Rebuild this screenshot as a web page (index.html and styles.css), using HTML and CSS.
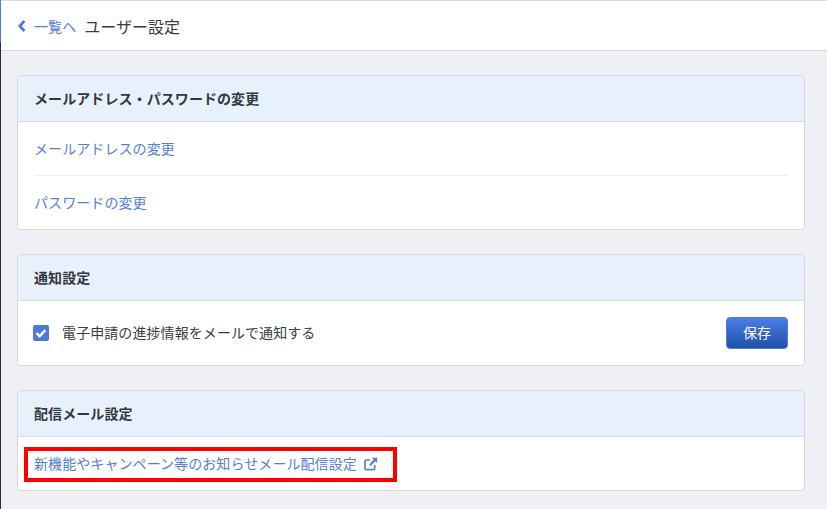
FILE: index.html
```html
<!DOCTYPE html>
<html lang="ja">
<head>
<meta charset="utf-8">
<title>ユーザー設定</title>
<link rel="stylesheet" href="styles.css">
</head>
<body>
<div class="rail"><div class="rail-active"></div></div>
<div class="page">
  <header class="topbar">
    <a class="back" href="#">
      <svg class="back-icon" viewBox="0 0 8 12" width="8" height="12"><path d="M6.4 1 1.8 6l4.6 5" fill="none" stroke="#4a7bdc" stroke-width="2.8"/></svg>
      <span>一覧へ</span>
    </a>
    <h1 class="title">ユーザー設定</h1>
  </header>
  <main class="content">
    <section class="card">
      <h2 class="card-head"><span class="lift">メールアドレス・パスワードの変更</span></h2>
      <div class="card-body">
        <div class="row"><a class="link lift" href="#">メールアドレスの変更</a></div>
        <div class="row row-last"><a class="link lift" href="#">パスワードの変更</a></div>
      </div>
    </section>
    <section class="card">
      <h2 class="card-head"><span class="lift">通知設定</span></h2>
      <div class="card-body">
        <div class="notify">
          <label class="check">
            <span class="box"><svg viewBox="0 0 16 16" width="16" height="16"><path d="M3.6 8.2 6.6 11.2 12.4 5.2" fill="none" stroke="#fff" stroke-width="2.4"/></svg></span>
            <span class="lift">電子申請の進捗情報をメールで通知する</span>
          </label>
          <button class="save" type="button"><span class="lift">保存</span></button>
        </div>
      </div>
    </section>
    <section class="card">
      <h2 class="card-head"><span class="lift">配信メール設定</span></h2>
      <div class="card-body mail">
        <a class="link ext" href="#"><span class="lift">新機能やキャンペーン等のお知らせメール配信設定</span>
          <svg viewBox="0 0 14 14" width="14" height="14"><path d="M10.7 8v3.6a1 1 0 0 1-1 1H2a1 1 0 0 1-1-1V4a1 1 0 0 1 1-1H6" fill="none" stroke="#5480d8" stroke-width="1.7"/><path d="M7.8.8h5.4v5.4l-1.9-1.9-4.6 4.7-1.6-1.6 4.6-4.7z" fill="#5480d8"/></svg>
        </a>
        <div class="highlight"></div>
      </div>
    </section>
  </main>
</div>
</body>
</html>
```
FILE: styles.css
```css
* { box-sizing: border-box; }
html, body { margin: 0; height: 100%; }
body {
  display: flex;
  height: 509px;
  overflow: hidden;
  font-family: "Noto Sans CJK JP", "Noto Sans", sans-serif;
  font-size: 14px;
  letter-spacing: 0.08px;
  color: #3a3d42;
  background: #eff0f4;
}
.lift { display: block; padding-bottom: 2px; }
.rail { width: 1px; flex: none; background: #2b2f36; }
.rail-active { height: 42px; background: #4a7bdc; }
.page { flex: 1; min-width: 0; }
.topbar {
  height: 51px;
  display: flex;
  align-items: center;
  padding-left: 16px;
  background: #fff;
  border-top: 1px solid #d9dadd;
  border-bottom: 1px solid #d5d6da;
}
.back {
  display: flex;
  align-items: center;
  gap: 8px;
  margin-left: 1px;
  color: #5480d8;
  text-decoration: none;
  line-height: 20px;
}
.title { margin: 0 0 0 8px; font-size: 16px; font-weight: 400; line-height: 24px; letter-spacing: 0; color: #3a3d42; }
.content {
  padding: 24px 22px 0 16px;
  display: flex;
  flex-direction: column;
  gap: 24px;
}
.card {
  background: #fff;
  border: 1px solid #d5d7dc;
  border-radius: 4px;
  overflow: hidden;
}
.card-head {
  margin: 0;
  height: 46px;
  padding: 0 16px;
  display: flex;
  align-items: center;
  font-size: 14px;
  font-weight: 700;
  color: #34373c;
  background: #e7f1fe;
  border-bottom: 1px solid #d5dbe4;
}
.card-body { padding: 0 16px; }
.row {
  height: 54px;
  display: flex;
  align-items: center;
  border-bottom: 1px solid #eceef1;
}
.row-last { height: 53px; border-bottom: 0; }
.link { color: #5480d8; text-decoration: none; }
.notify {
  height: 64px;
  display: flex;
  align-items: center;
  justify-content: space-between;
}
.check { display: flex; align-items: center; gap: 13px; margin-left: -1px; }
.box {
  width: 16px;
  height: 16px;
  border-radius: 2px;
  background: #4a7bdc;
  display: flex;
}
.save {
  width: 62px;
  height: 32px;
  padding: 0;
  border: 1px solid #4a7ee0;
  border-radius: 4px;
  color: #fff;
  font: inherit;
  background: linear-gradient(#4a7ee6, #2150aa);
}
.mail {
  position: relative;
  height: 53px;
  display: flex;
  align-items: center;
}
.ext { display: flex; align-items: center; gap: 7px; }
.highlight {
  position: absolute;
  left: 6px;
  top: 10px;
  width: 373px;
  height: 35px;
  border: 4px solid #ff0000;
  pointer-events: none;
}
```
